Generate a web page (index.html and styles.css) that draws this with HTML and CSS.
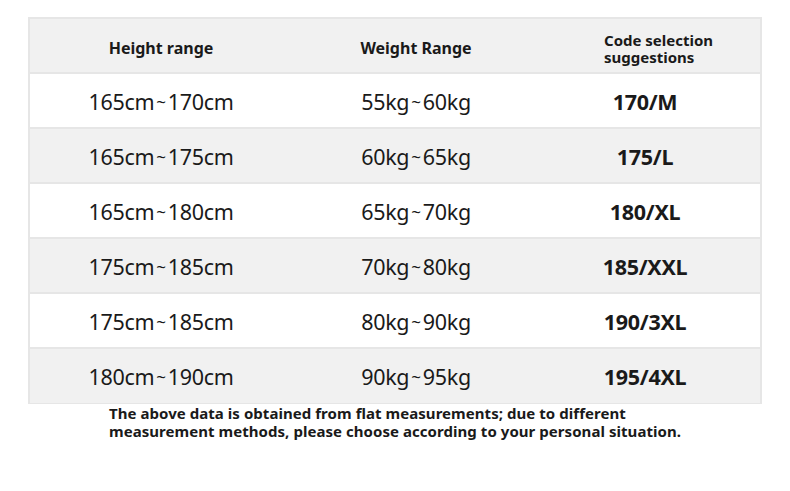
FILE: index.html
```html
<!DOCTYPE html>
<html>
<head>
<meta charset="utf-8">
<link rel="stylesheet" href="styles.css">
</head>
<body>
<div class="page">
  <div class="table">
    <div class="row head">
      <div class="cell">Height range</div>
      <div class="cell">Weight Range</div>
      <div class="cell code-head"><span>Code selection<br>suggestions</span></div>
    </div>
    <div class="row">
      <div class="cell">165cm<span class="t">~</span>170cm</div>
      <div class="cell">55kg<span class="t">~</span>60kg</div>
      <div class="cell code">170/M</div>
    </div>
    <div class="row alt">
      <div class="cell">165cm<span class="t">~</span>175cm</div>
      <div class="cell">60kg<span class="t">~</span>65kg</div>
      <div class="cell code">175/L</div>
    </div>
    <div class="row">
      <div class="cell">165cm<span class="t">~</span>180cm</div>
      <div class="cell">65kg<span class="t">~</span>70kg</div>
      <div class="cell code">180/XL</div>
    </div>
    <div class="row alt">
      <div class="cell">175cm<span class="t">~</span>185cm</div>
      <div class="cell">70kg<span class="t">~</span>80kg</div>
      <div class="cell code">185/XXL</div>
    </div>
    <div class="row">
      <div class="cell">175cm<span class="t">~</span>185cm</div>
      <div class="cell">80kg<span class="t">~</span>90kg</div>
      <div class="cell code">190/3XL</div>
    </div>
    <div class="row alt">
      <div class="cell">180cm<span class="t">~</span>190cm</div>
      <div class="cell">90kg<span class="t">~</span>95kg</div>
      <div class="cell code">195/4XL</div>
    </div>
  </div>
  <p class="note">The above data is obtained from flat measurements; due to different<br>measurement methods, please choose according to your personal situation.</p>
</div>
</body>
</html>
```
FILE: styles.css
```css
html, body {
  margin: 0;
  padding: 0;
  background: #ffffff;
}
body {
  font-family: "Noto Sans", "Open Sans", sans-serif;
  color: #1a1a1a;
}
.page {
  padding: 17px 28px 0 28px;
  width: 734px;
}
.table {
  border: 2px solid #e6e6e6;
  border-bottom-width: 1px;
}
.row {
  display: grid;
  grid-template-columns: 262px 248px 220px;
  height: 53px;
  border-bottom: 2px solid #e6e6e6;
  background: #ffffff;
}
.row:last-child {
  border-bottom: none;
  height: 54px;
}
.row.head, .row.alt {
  background: #f1f1f1;
}
.cell {
  display: flex;
  align-items: center;
  justify-content: center;
  font-size: 21.5px;
  letter-spacing: -0.3px;
  padding-top: 1px;
}
.t {
  font-size: 17px;
  margin: 0 2px;
}
.head .cell {
  font-size: 16px;
  font-weight: 700;
  letter-spacing: 0;
  padding-top: 4px;
}
.code-head {
  justify-content: flex-start;
}
.code-head span {
  margin-left: 64px;
  margin-top: 2px;
  line-height: 17px;
  font-size: 15px;
}
.code {
  font-weight: 700;
  font-size: 21.5px;
  padding-right: 10px;
}
.note {
  margin: 0;
  padding-left: 81px;
  font-size: 15px;
  font-weight: 700;
  line-height: 18px;
  letter-spacing: 0.05px;
}
```
